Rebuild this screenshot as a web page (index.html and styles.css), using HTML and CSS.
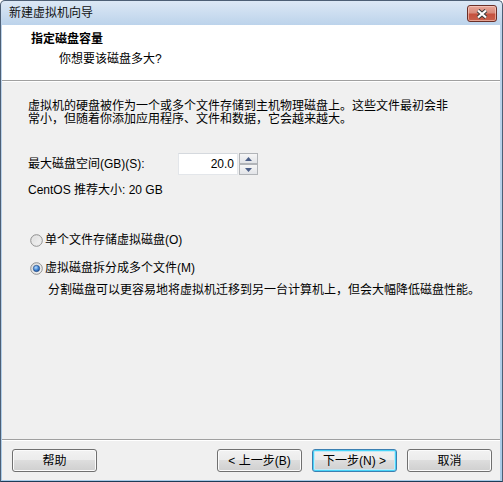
FILE: index.html
```html
<!DOCTYPE html>
<html lang="zh-CN">
<head>
<meta charset="utf-8">
<title>新建虚拟机向导</title>
<link rel="stylesheet" href="styles.css">
</head>
<body>
<div class="window">
  <div class="titlebar">
    <span class="title">新建虚拟机向导</span>
    <span class="close-btn">
      <svg width="14" height="10" viewBox="0 0 14 10">
        <path d="M3 1.5 L11 8.5 M11 1.5 L3 8.5" stroke="#3d3d3d" stroke-width="4.2" stroke-linecap="butt"/>
        <path d="M3 1.5 L11 8.5 M11 1.5 L3 8.5" stroke="#ffffff" stroke-width="2.2" stroke-linecap="butt"/>
      </svg>
    </span>
  </div>
  <div class="client">
    <div class="header">
      <div class="header-title">指定磁盘容量</div>
      <div class="header-sub">你想要该磁盘多大?</div>
    </div>
    <div class="content">
      <p class="desc">虚拟机的硬盘被作为一个或多个文件存储到主机物理磁盘上。这些文件最初会非<br>常小，但随着你添加应用程序、文件和数据，它会越来越大。</p>
      <div class="size-row">
        <span class="size-label">最大磁盘空间(GB)(S):</span>
        <div class="spin">
          <div class="spin-field">20.0</div>
          <div class="spin-btns">
            <span class="spin-btn"><svg width="7" height="4" viewBox="0 0 7 4"><path d="M0 4 L3.5 0 L7 4 Z" fill="#4b5e86"/></svg></span>
            <span class="spin-btn"><svg width="7" height="4" viewBox="0 0 7 4"><path d="M0 0 L3.5 4 L7 0 Z" fill="#4b5e86"/></svg></span>
          </div>
        </div>
      </div>
      <div class="recommend">CentOS 推荐大小: 20 GB</div>
      <label class="radio radio-first">
        <svg class="radio-icon" width="13" height="13" viewBox="0 0 13 13">
          <defs>
            <linearGradient id="rg1" x1="0" y1="0" x2="1" y2="1">
              <stop offset="0" stop-color="#d8d8d8"/>
              <stop offset="1" stop-color="#f8f8f8"/>
            </linearGradient>
          </defs>
          <circle cx="6.5" cy="6.5" r="5.8" fill="url(#rg1)" stroke="#8f8f8f" stroke-width="1"/>
          <circle cx="6.5" cy="6.5" r="4.2" fill="none" stroke="#e9e9e9" stroke-width="1"/>
        </svg>
        <span>单个文件存储虚拟磁盘(O)</span>
      </label>
      <label class="radio radio-second">
        <svg class="radio-icon" width="13" height="13" viewBox="0 0 13 13">
          <defs>
            <linearGradient id="rg2" x1="0" y1="0" x2="1" y2="1">
              <stop offset="0" stop-color="#d8d8d8"/>
              <stop offset="1" stop-color="#f8f8f8"/>
            </linearGradient>
            <radialGradient id="dot" cx="0.4" cy="0.35" r="0.7">
              <stop offset="0" stop-color="#b6dcff"/>
              <stop offset="0.6" stop-color="#3a7fd0"/>
              <stop offset="1" stop-color="#1a4e95"/>
            </radialGradient>
          </defs>
          <circle cx="6.5" cy="6.5" r="5.8" fill="url(#rg2)" stroke="#8f8f8f" stroke-width="1"/>
          <circle cx="6.5" cy="6.5" r="3.2" fill="url(#dot)" stroke="#23477a" stroke-width="0.6"/>
        </svg>
        <span>虚拟磁盘拆分成多个文件(M)</span>
      </label>
      <div class="radio-note">分割磁盘可以更容易地将虚拟机迁移到另一台计算机上，但会大幅降低磁盘性能。</div>
    </div>
    <div class="footer">
      <button class="btn">帮助</button>
      <div class="btn-group">
        <button class="btn">&lt; 上一步(B)</button>
        <button class="btn btn-default">下一步(N) &gt;</button>
        <button class="btn">取消</button>
      </div>
    </div>
  </div>
</div>
</body>
</html>
```
FILE: styles.css
```css
html, body {
  margin: 0;
  padding: 0;
  background: #ffffff;
}

body {
  font-family: "Liberation Sans", "Noto Sans CJK SC", sans-serif;
  font-size: 12px;
  color: #000;
}

.window {
  width: 503px;
  height: 482px;
  box-sizing: border-box;
  border: 1px solid #4d5f75;
  border-bottom-color: #1d3c57;
  border-radius: 5px 5px 0 0;
  padding: 0 2px 1px 1px;
  display: flex;
  flex-direction: column;
  background: linear-gradient(to bottom, #dce8f5 0, #bcd3eb 24px, #b5cfe9 60%, #a9cbe8 100%);
  overflow: hidden;
}

.titlebar {
  height: 24px;
  flex: none;
  display: flex;
  align-items: flex-start;
  padding-left: 7px;
}

.title {
  line-height: 24px;
  color: #111;
}

.close-btn {
  margin-left: auto;
  margin-right: 3px;
  margin-top: 4px;
  width: 30px;
  height: 17px;
  box-sizing: border-box;
  border: 1px solid #6a2f27;
  border-radius: 3px;
  background: linear-gradient(to bottom, #e8a597 0, #d88b7b 45%, #c5513e 55%, #c9614c 100%);
  box-shadow: inset 0 0 0 1px rgba(255, 220, 210, 0.55);
  display: flex;
  align-items: center;
  justify-content: center;
}

.client {
  flex: 1;
  display: flex;
  flex-direction: column;
  background: #f0f0f0;
}

.header {
  height: 56px;
  box-sizing: border-box;
  flex: none;
  background: #ffffff;
  border-bottom: 1px solid #a0a0a0;
  box-shadow: 0 1px 0 #ffffff;
  padding: 7px 0 0 29px;
}

.header-title {
  font-weight: bold;
  line-height: 15px;
}

.header-sub {
  line-height: 15px;
  margin-top: 5px;
  padding-left: 28px;
}

.content {
  flex: 1;
  padding: 19px 0 0 26px;
}

.desc {
  margin: 0;
  line-height: 13px;
}

.size-row {
  margin-top: 27px;
  display: flex;
  align-items: center;
  height: 22px;
}

.size-label {
  width: 150px;
  line-height: 13px;
}

.spin {
  display: flex;
  height: 22px;
}

.spin-field {
  width: 60px;
  height: 22px;
  box-sizing: border-box;
  border: 1px solid #e3e6ea;
  border-top-color: #d5d9de;
  background: #ffffff;
  text-align: right;
  padding-right: 3px;
  line-height: 20px;
}

.spin-btns {
  width: 19px;
  display: flex;
  flex-direction: column;
  margin-left: 1px;
}

.spin-btn {
  flex: 1;
  box-sizing: border-box;
  border: 1px solid #b1b4b8;
  background: linear-gradient(to bottom, #f6f6f6, #e2e4e8);
  display: flex;
  align-items: center;
  justify-content: center;
}

.recommend {
  margin-top: 9px;
  line-height: 13px;
}

.radio {
  display: flex;
  align-items: center;
  height: 16px;
  line-height: 16px;
}

.radio-first {
  margin-top: 35px;
}

.radio-second {
  margin-top: 12px;
}

.radio-icon {
  width: 13px;
  height: 13px;
  margin-right: 2px;
  margin-left: 2px;
  flex: none;
}

.radio-note {
  margin-top: 8px;
  padding-left: 20px;
  line-height: 13px;
}

.footer {
  flex: none;
  height: 31px;
  border-top: 1px solid #a0a0a0;
  box-shadow: inset 0 1px 0 #ffffff;
  padding: 9px 8px 0 10px;
  display: flex;
  justify-content: space-between;
  align-items: flex-start;
}

.btn-group {
  display: flex;
  gap: 10px;
}

.btn {
  width: 85px;
  height: 23px;
  box-sizing: border-box;
  margin: 0;
  padding: 0;
  border: 1px solid #707070;
  border-radius: 3px;
  background: linear-gradient(to bottom, #f2f2f2 0, #ebebeb 50%, #dddddd 50%, #cfcfcf 100%);
  box-shadow: inset 0 0 0 1px #fbfbfb;
  font-family: "Liberation Sans", "Noto Sans CJK SC", sans-serif;
  font-size: 12px;
  color: #000;
  line-height: 20px;
  text-align: center;
}

.btn-default {
  border-color: #3c7fb1;
  box-shadow: inset 0 0 0 1px #48d4f8, inset 0 0 0 2px #c2e9f7;
}
```
